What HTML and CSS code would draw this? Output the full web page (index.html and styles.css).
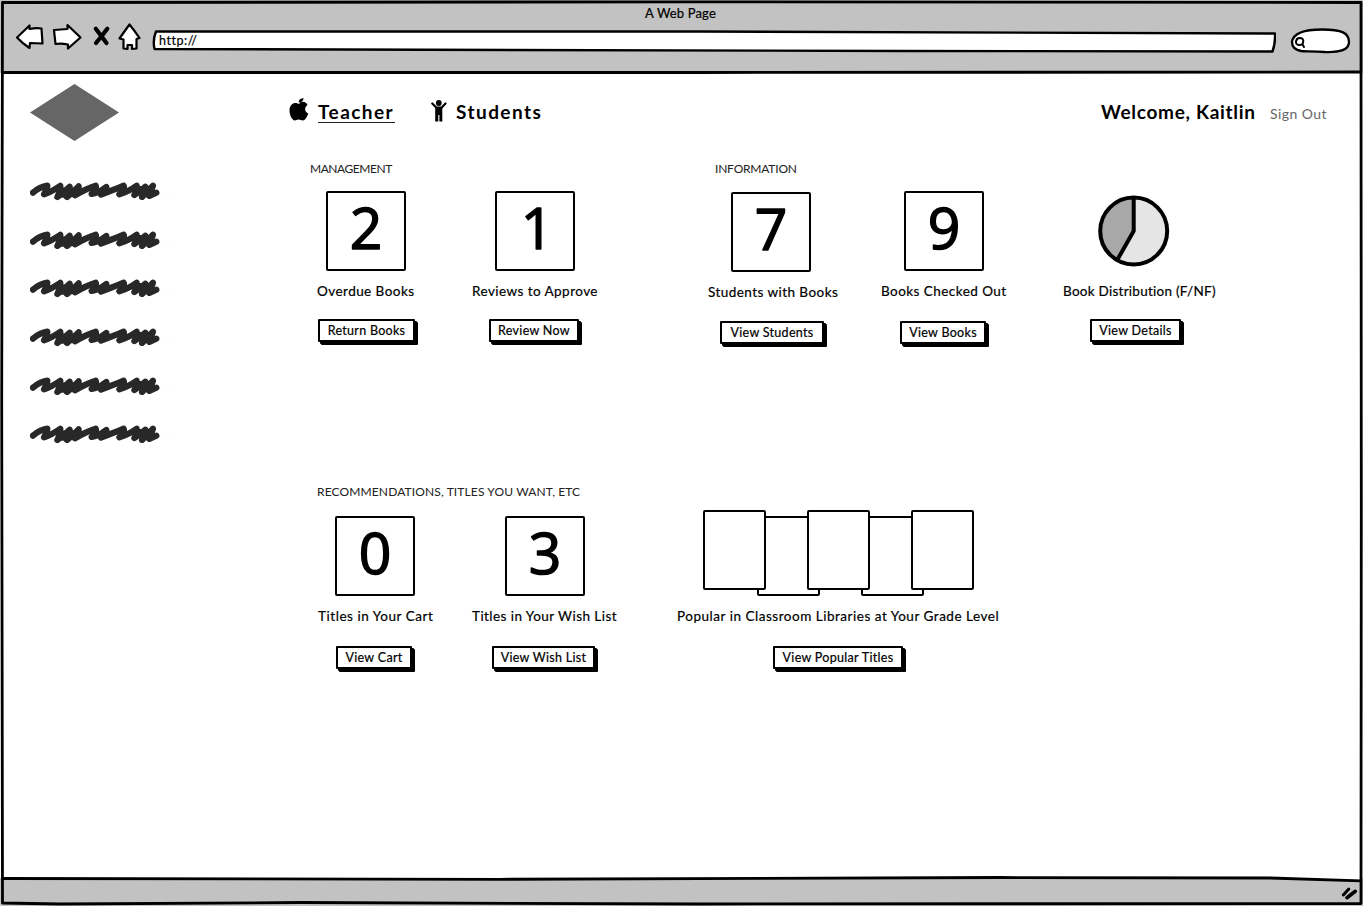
FILE: index.html
```html
<!DOCTYPE html>
<html lang="en">
<head>
<meta charset="utf-8">
<title>A Web Page</title>
<link rel="stylesheet" href="styles.css">
</head>
<body>
<svg class="defs" width="0" height="0">
  <symbol id="scribble" viewBox="30 36 420 56">
    <path d="M39 68Q60 50 82 47Q84 52 72 73Q95 65 121 47Q122 60 112 81Q132 66 149 50Q150 62 141 81Q160 66 176 49Q177 62 165 76Q200 55 227 47Q232 55 215 72Q238 68 259 51Q262 62 243 74Q285 58 311 47Q316 54 298 73Q330 62 350 47Q352 60 343 75Q362 64 376 50L366 81L399 47L388 78L409 68M360 57L395 62L370 72M122 62L165 60L125 74L158 70" fill="none" stroke="#282828" stroke-width="18.500" stroke-linecap="round" stroke-linejoin="round"/>
    <circle cx="444" cy="67" r="2" fill="#ddd"/>
  </symbol>
</svg>
<div class="window">
  <header class="chrome">
    <div class="chrome-title">A Web Page</div>
    <div class="toolbar">
      <svg class="nav-icons" width="130" height="32" viewBox="14 20 130 32" fill="#fff" stroke="#000" stroke-width="2.2" stroke-linejoin="round">
        <path d="M17 37.500L29.500 25.500V29Q36 27.500 41.500 28.500L42.500 43.500L30 43L29.500 48Q22 43 17 37.500Z"/>
        <path d="M54 30L67.500 29V25L80.500 37.500L68 48.500V44.500Q61 43 55.500 44Z"/>
        <path d="M95.800 28.800L106.500 43M107.300 28.800Q102 36 96 43" fill="none" stroke-width="4.200" stroke-linecap="round"/>
        <path d="M129.500 24.500Q134 30 139.500 38L136.500 39V48.500L132 49V45L127.500 45L127.500 49L123.500 48.500V39.500L119.500 38.500Q124 32 129.500 24.500Z"/>
      </svg>
      <div class="address">
        <svg class="address-shape" width="1124" height="24" viewBox="152 29 1124 24"><path d="M156 31.500L700 31.500L1275 33.500Q1275.500 43 1272.500 51.500L900 51L154.500 49Q152.500 40 156 31.500Z" fill="#fff" stroke="#000" stroke-width="2.400" stroke-linejoin="round"/></svg>
        <span class="address-text">http://</span>
      </div>
      <svg class="search" width="62" height="28" viewBox="1290 27 62 28" fill="#fff" stroke="#000" stroke-width="2.300" stroke-linecap="round">
        <path d="M1292 42C1293 34 1303 29.500 1322 29.500C1342 29.500 1349 33 1349 42C1349 50 1340 52.500 1325 52C1313 51 1305 51.500 1301 51C1296 50 1292 47 1292 42Z"/>
        <path d="M1302.500 44.500L1304 47M1299.700 38C1302.500 38 1303.700 39.500 1303.200 42C1303 44 1301.500 45 1299 45C1296.500 45 1295.800 43 1296 41.500C1296.300 39.500 1297.500 38 1299.700 38Z" stroke-width="2"/>
      </svg>
    </div>
  </header>

  <div class="body">
    <aside class="sidebar">
      <svg class="logo" width="89" height="58" viewBox="0 0 89 58"><path d="M44.500 0L89 28.500L44.500 57L0 28.500Z" fill="#666"/></svg>
      <nav class="menu">
        <svg width="140" height="18.700"><use href="#scribble"/></svg>
        <svg width="140" height="18.700"><use href="#scribble"/></svg>
        <svg width="140" height="18.700"><use href="#scribble"/></svg>
        <svg width="140" height="18.700"><use href="#scribble"/></svg>
        <svg width="140" height="18.700"><use href="#scribble"/></svg>
        <svg width="140" height="18.700"><use href="#scribble"/></svg>
      </nav>
    </aside>

    <main class="main">
      <div class="tabs">
        <svg width="20" height="24" viewBox="289 98 20 24"><path d="M300 103C301 101 306 101 307.500 105C304 107 304.500 112 308.300 113.500C307 117 305 120.500 303 120.500C301 120.500 300.500 119.500 298.500 119.500C296.500 119.500 296 120.700 294.500 120.500C291.500 119.500 289.500 114.500 289.500 110.500C289.500 104.500 294 102 297.500 103.500C298.500 104 299 104 300 103ZM298.700 102.500C298.700 99.500 301 98.300 303.600 98.300C303.500 101 301.500 102.500 298.700 102.500Z"/></svg>
        <a class="tab tab-active">Teacher</a>
        <svg class="person" width="16" height="22" viewBox="431 100 16 22"><circle cx="438.800" cy="103" r="2.900"/><path d="M432.300 103.500L436.500 107.700H441.500L445.500 103.500" fill="none" stroke="#000" stroke-width="2.200" stroke-linecap="round" stroke-linejoin="round"/><path d="M435.200 107H442.300V121.500H439.400V115H438.300V121.500H435.200Z"/></svg>
        <a class="tab">Students</a>
        <span class="welcome">Welcome, Kaitlin</span>
        <a class="signout">Sign Out</a>
      </div>

      <div class="row row-top">
        <section class="management">
          <h2>MANAGEMENT</h2>
          <div class="cards">
            <article class="card overdue">
              <svg class="tile" viewBox="0 0 76 76"><text x="38" y="56">2</text></svg>
              <p class="label">Overdue Books</p>
              <button>Return Books</button>
            </article>
            <article class="card reviews">
              <svg class="tile" viewBox="0 0 76 76"><text x="40" y="56">1</text></svg>
              <p class="label">Reviews to Approve</p>
              <button>Review Now</button>
            </article>
          </div>
        </section>
        <section class="information">
          <h2>INFORMATION</h2>
          <div class="cards">
            <article class="card with-books">
              <svg class="tile" viewBox="0 0 76 76"><text x="38" y="56">7</text></svg>
              <p class="label">Students with Books</p>
              <button>View Students</button>
            </article>
            <article class="card checked-out">
              <svg class="tile" viewBox="0 0 76 76"><text x="38" y="56">9</text></svg>
              <p class="label">Books Checked Out</p>
              <button>View Books</button>
            </article>
            <article class="card distribution">
              <svg class="pie" width="72" height="80" viewBox="1098 191 72 80"><circle cx="1133.700" cy="231" r="33.500" fill="#e5e5e5"/><path d="M1133.700 231V197.500A33.500 33.500 0 0 0 1117.500 260Z" fill="#a8a8a8"/><path d="M1133.700 197.500V231L1117.500 259.500" fill="none" stroke="#000" stroke-width="4" stroke-linejoin="round"/><circle cx="1133.700" cy="231" r="33.500" fill="none" stroke="#000" stroke-width="4"/></svg>
              <p class="label">Book Distribution (F/NF)</p>
              <button>View Details</button>
            </article>
          </div>
        </section>
      </div>

      <div class="row row-bottom">
        <section class="wanted">
          <h2>RECOMMENDATIONS, TITLES YOU WANT, ETC</h2>
          <div class="cards">
            <article class="card cart">
              <svg class="tile" viewBox="0 0 76 76"><text x="38" y="56">0</text></svg>
              <p class="label">Titles in Your Cart</p>
              <button>View Cart</button>
            </article>
            <article class="card wish">
              <svg class="tile" viewBox="0 0 76 76"><text x="38" y="56">3</text></svg>
              <p class="label">Titles in Your Wish List</p>
              <button>View Wish List</button>
            </article>
          </div>
        </section>
        <article class="card popular">
          <div class="covers"><i></i><i class="back"></i><i></i><i class="back"></i><i></i></div>
          <p class="label">Popular in Classroom Libraries at Your Grade Level</p>
          <button>View Popular Titles</button>
        </article>
      </div>
    </main>
  </div>

  <footer class="status">
    <svg width="18" height="16" viewBox="1340 885 18 16" fill="none" stroke="#000" stroke-linecap="round"><path d="M1343.300 895L1348.800 889" stroke-width="3"/><path d="M1347 897.700L1355.300 891.300" stroke-width="3.600"/></svg>
  </footer>

  <svg class="frame" width="1363" height="906" viewBox="0 0 1363 906">
    <path d="M2.500 877L500 878L1000 876.500L1270 877.500L1361 880V870H2.500Z" fill="#fff"/>
    <g fill="none" stroke="#000" stroke-width="2.800" stroke-linejoin="round">
      <path d="M2.500 2.500L700 1.800L1361 2.500L1361.300 500L1361 903.500L700 904L300 902.500L60 904L2.500 903L1.700 400Z"/>
      <path d="M2.500 72.500L700 72.500L1361 72"/>
      <path d="M2.500 878.500L500 879.300L1000 877.500L1270 878L1361 880.800"/>
    </g>
  </svg>
</div>
</body>
</html>
```
FILE: styles.css
```css
* { box-sizing: border-box; }
body { margin: 0; background: #fff; color: #000; font-family: Lato, "Open Sans", sans-serif; overflow: hidden; }
.defs { position: absolute; }
svg { display: block; flex: none; }
h2, p { margin: 0; font-weight: 400; white-space: nowrap; }

.window { position: relative; width: 1363px; height: 906px; display: flex; flex-direction: column; }
.frame { position: absolute; inset: 0; pointer-events: none; }

.chrome { height: 73px; background: #c2c2c2; }
.chrome-title { height: 20px; padding-top: 5px; padding-right: 2px; text-align: center; font-size: 13px; line-height: 16px; letter-spacing: .15px; -webkit-text-stroke: .2px #000; }
.toolbar { display: flex; padding-left: 14px; }
.address { position: relative; width: 1124px; height: 24px; margin: 9px 14px 0 8px; }
.address-shape { position: absolute; inset: 0; }
.address-text { position: relative; display: block; padding: 4px 0 0 7px; font-size: 12.5px; line-height: 16px; letter-spacing: .55px; -webkit-text-stroke: .2px #000; }
.search { margin-top: 7px; }

.body { flex: 1; display: flex; }
.sidebar { width: 289px; padding: 11px 0 0 30px; }
.menu { display: flex; flex-direction: column; gap: 30px; margin-top: 40px; }
.main { flex: 1; }

.tabs { display: flex; height: 82px; padding-top: 25px; }
.tab { height: 25px; margin: 0 0 0 9px; font-size: 19px; font-weight: 700; line-height: 27px; letter-spacing: 1.450px; }
.tab-active { width: 77px; border-bottom: 1.500px solid #222; }
.person { margin: 2px 0 0 36px; }
.welcome { width: 154px; margin-left: auto; font-size: 19px; font-weight: 700; line-height: 27px; letter-spacing: .7px; white-space: nowrap; }
.signout { width: 58px; margin: 0 35px 0 15px; color: #666; font-size: 14px; line-height: 31px; letter-spacing: .450px; white-space: nowrap; }

h2 { font-size: 12px; line-height: 28px; color: #222; letter-spacing: -.2px; }
.management h2 { letter-spacing: -.450px; }
.wanted h2 { padding-top: 1px; letter-spacing: .130px; line-height: 27px; }
.row { display: flex; }
.row-top { height: 322px; }
.management { width: 405px; padding-left: 21px; }
.information { padding-left: 21px; }
.cards { display: flex; margin-top: 8px; }
.management .cards { padding-left: 7px; }
.information .cards { margin-left: -7px; }

.card { display: flex; flex-direction: column; align-items: flex-start; }
.tile { width: 80px; height: 80px; border: 2px solid #000; border-radius: 2px; margin-left: var(--tile); }
.tile text { font-family: "Open Sans", sans-serif; font-size: 57px; text-anchor: middle; stroke: #000; stroke-width: 1.500px; stroke-linejoin: round; }
.label { margin-top: 10px; font-size: 13.500px; line-height: 20px; letter-spacing: .450px; -webkit-text-stroke: .2px #000; }
button { width: var(--button-width); height: 23px; margin: 18px 0 0 var(--button); padding: 0; border: 2px solid #000; border-radius: 1px; background: #fff; color: #000; box-shadow: 2px 2px 0 #000, 3px 3px 0 #000; font: 12.500px/19px Lato, sans-serif; letter-spacing: .300px; -webkit-text-stroke: .2px #000; white-space: nowrap; }

.overdue { width: 155px; --tile: 9px; --button: 1px; --button-width: 97px; }
.reviews { --tile: 23px; --button: 17px; --button-width: 90px; }
.with-books { width: 173px; padding-top: 1px; --tile: 23px; --button: 12px; --button-width: 104px; }
.checked-out { width: 182px; --tile: 23px; --button: 19px; --button-width: 86px; }
.checked-out button { margin-top: 20px; }
.with-books button { margin-top: 19px; }
.distribution { --button: 27px; --button-width: 91px; }
.distribution .label { letter-spacing: .260px; }
.pie { margin-left: 35px; }

.wanted { width: 388px; padding-left: 28px; }
.wanted .cards { margin-top: 11px; }
.cart { width: 155px; --tile: 18px; --button: 19px; --button-width: 76px; }
.wish { --tile: 33px; --button: 20px; --button-width: 103px; }
.wanted button, .popular button { margin-top: 20px; }
.cart .label { padding-left: 1px; letter-spacing: .550px; }
.popular .label { letter-spacing: .520px; }
.popular { padding-top: 33px; --button: 96px; --button-width: 130px; }
.covers { display: flex; margin-left: 26px; height: 86px; }
.covers i { width: 63px; height: 80px; margin-right: -10.900px; border: 2px solid #000; border-radius: 2px; background: #fff; position: relative; z-index: 1; }
.covers .back { margin: 6px -12.400px 0 1.500px; z-index: 0; }

.status { display: flex; height: 28px; padding: 7px 0 0 1340px; background: #c2c2c2; }
```
